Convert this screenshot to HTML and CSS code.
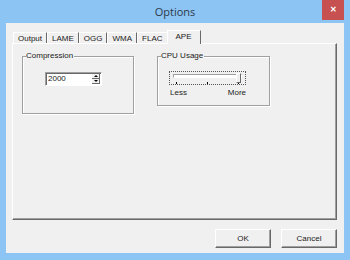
FILE: index.html
```html
<!DOCTYPE html>
<html lang="en">
<head>
    <meta charset="UTF-8">
    <title>Options</title>
    <link rel="stylesheet" href="styles.css">
</head>
<body>
    <div class="window">
        <div class="titlebar">
            <span class="title">Options</span>
            <button class="close">&#x2715;</button>
        </div>

        <div class="client">
            <div class="tabs">
                <span class="tab">Output</span>
                <span class="tab">LAME</span>
                <span class="tab">OGG</span>
                <span class="tab">WMA</span>
                <span class="tab">FLAC</span>
                <span class="tab active">APE</span>
            </div>

            <div class="panel">
                <div class="group compression">
                    <span class="group-label">Compression</span>
                    <div class="spin">
                        <span class="spin-value">2000</span>
                        <span class="spin-buttons">
                            <span class="spin-up"></span>
                            <span class="spin-down"></span>
                        </span>
                    </div>
                </div>

                <div class="group cpu">
                    <span class="group-label">CPU Usage</span>
                    <div class="slider">
                        <div class="track"></div>
                        <span class="thumb"></span>
                        <div class="ticks">
                            <span></span><span></span><span></span>
                        </div>
                    </div>
                    <div class="slider-labels">
                        <span>Less</span>
                        <span>More</span>
                    </div>
                </div>
            </div>

            <div class="actions">
                <button class="btn">OK</button>
                <button class="btn">Cancel</button>
            </div>
        </div>
    </div>
</body>
</html>
```

FILE: styles.css
```css
body {
    margin: 0;
    background: #8cc4f4;
    font-family: 'Liberation Sans', Arial, sans-serif;
    font-size: 8px;
    color: #222;
}

.window {
    width: 350px;
    height: 260px;
    display: flex;
    flex-direction: column;
}

.titlebar {
    height: 23px;
    display: grid;
    grid-template-columns: 1fr auto 1fr;
    align-items: start;
}

.title {
    grid-column: 2;
    font-family: 'Open Sans', sans-serif;
    font-size: 11px;
    line-height: 23px;
    color: #2b3a4a;
}

.close {
    grid-column: 3;
    justify-self: end;
    width: 22px;
    height: 20px;
    margin-right: 6px;
    padding: 0;
    border: none;
    background: #c75050;
    color: #fff;
    font-size: 8px;
    font-weight: bold;
    line-height: 20px;
}

.client {
    flex: 1;
    margin: 0 6px 7px;
    padding: 7px 7px 0 6px;
    background: #f0f0f0;
    display: flex;
    flex-direction: column;
}

/* tab strip */
.tabs {
    display: flex;
    align-items: flex-end;
    height: 13px;
    padding-left: 1px;
    position: relative;
    z-index: 1;
}

.tab {
    height: 11px;
    line-height: 11px;
    padding: 0 4px;
    border-left: 1px solid #fff;
    border-top: 1px solid #fff;
    border-right: 1px solid #696969;
    box-sizing: border-box;
}

.tab.active {
    height: 14px;
    margin-bottom: -1px;
    margin-left: -1px;
    padding: 0 8px 2px 8px;
    background: #f0f0f0;
}

.panel {
    height: 177px;
    box-sizing: border-box;
    border: 1px solid;
    border-color: #fff #696969 #696969 #fff;
    box-shadow: inset -1px -1px 0 #a0a0a0;
    display: flex;
    align-items: flex-start;
    gap: 23px;
    padding: 12px 0 0 9px;
}

/* group boxes */
.group {
    box-sizing: border-box;
    border: 1px solid #a0a0a0;
    box-shadow: inset 1px 1px 0 #fff, 1px 1px 0 #fff;
    display: flex;
    flex-direction: column;
    align-items: flex-start;
}

.group-label {
    margin: -6px 0 0 3px;
    padding: 0 1px 0 0;
    line-height: 10px;
    background: #f0f0f0;
}

.compression {
    width: 112px;
    height: 58px;
}

.cpu {
    width: 113px;
    height: 50px;
}

/* spin box */
.spin {
    margin: 11px 0 0 22px;
    width: 57px;
    height: 14px;
    box-sizing: border-box;
    display: flex;
    background: #fff;
    border: 1px solid;
    border-color: #a0a0a0 #fff #fff #a0a0a0;
    box-shadow: inset 1px 1px 0 #696969;
}

.spin-value {
    flex: 1;
    padding-left: 2px;
    line-height: 12px;
}

.spin-buttons {
    width: 8px;
    margin: 1px 1px 1px 0;
    display: flex;
    flex-direction: column;
}

.spin-up,
.spin-down {
    flex: 1;
    background: #f0f0f0;
    display: flex;
    align-items: center;
    justify-content: center;
    border-right: 1px solid #696969;
    border-bottom: 1px solid #696969;
}

.spin-up::after {
    content: '';
    border: 2px solid transparent;
    border-bottom: 2px solid #000;
    border-top: none;
}

.spin-down::after {
    content: '';
    border: 2px solid transparent;
    border-top: 2px solid #000;
    border-bottom: none;
}

/* slider */
.slider {
    position: relative;
    margin: 10px 0 0 11px;
    width: 77px;
    height: 14px;
    box-sizing: border-box;
    border: 1px dotted #555;
    padding: 2px 3px 0;
}

.track {
    height: 2px;
    border: 1px solid;
    border-color: #a0a0a0 #fff #fff #a0a0a0;
    background: #fff;
}

.thumb {
    position: absolute;
    right: 4px;
    top: 1px;
    width: 3px;
    height: 8px;
    background: #f0f0f0;
    border: 1px solid;
    border-color: #fff #696969 #696969 #fff;
}

.ticks {
    display: flex;
    justify-content: space-between;
    margin: 4px 3px 0;
}

.ticks span {
    width: 1px;
    height: 2px;
    background: #000;
}

.slider-labels {
    display: flex;
    justify-content: space-between;
    width: 76px;
    margin: 3px 0 0 12px;
    line-height: 10px;
}

/* dialog buttons */
.actions {
    display: flex;
    justify-content: flex-end;
    gap: 10px;
    margin-top: 9px;
}

.btn {
    width: 56px;
    height: 19px;
    padding: 0;
    font-family: inherit;
    font-size: 8px;
    color: #222;
    background: #f0f0f0;
    border: 1px solid;
    border-color: #fff #696969 #696969 #fff;
    box-shadow: inset -1px -1px 0 #a0a0a0;
}
```
